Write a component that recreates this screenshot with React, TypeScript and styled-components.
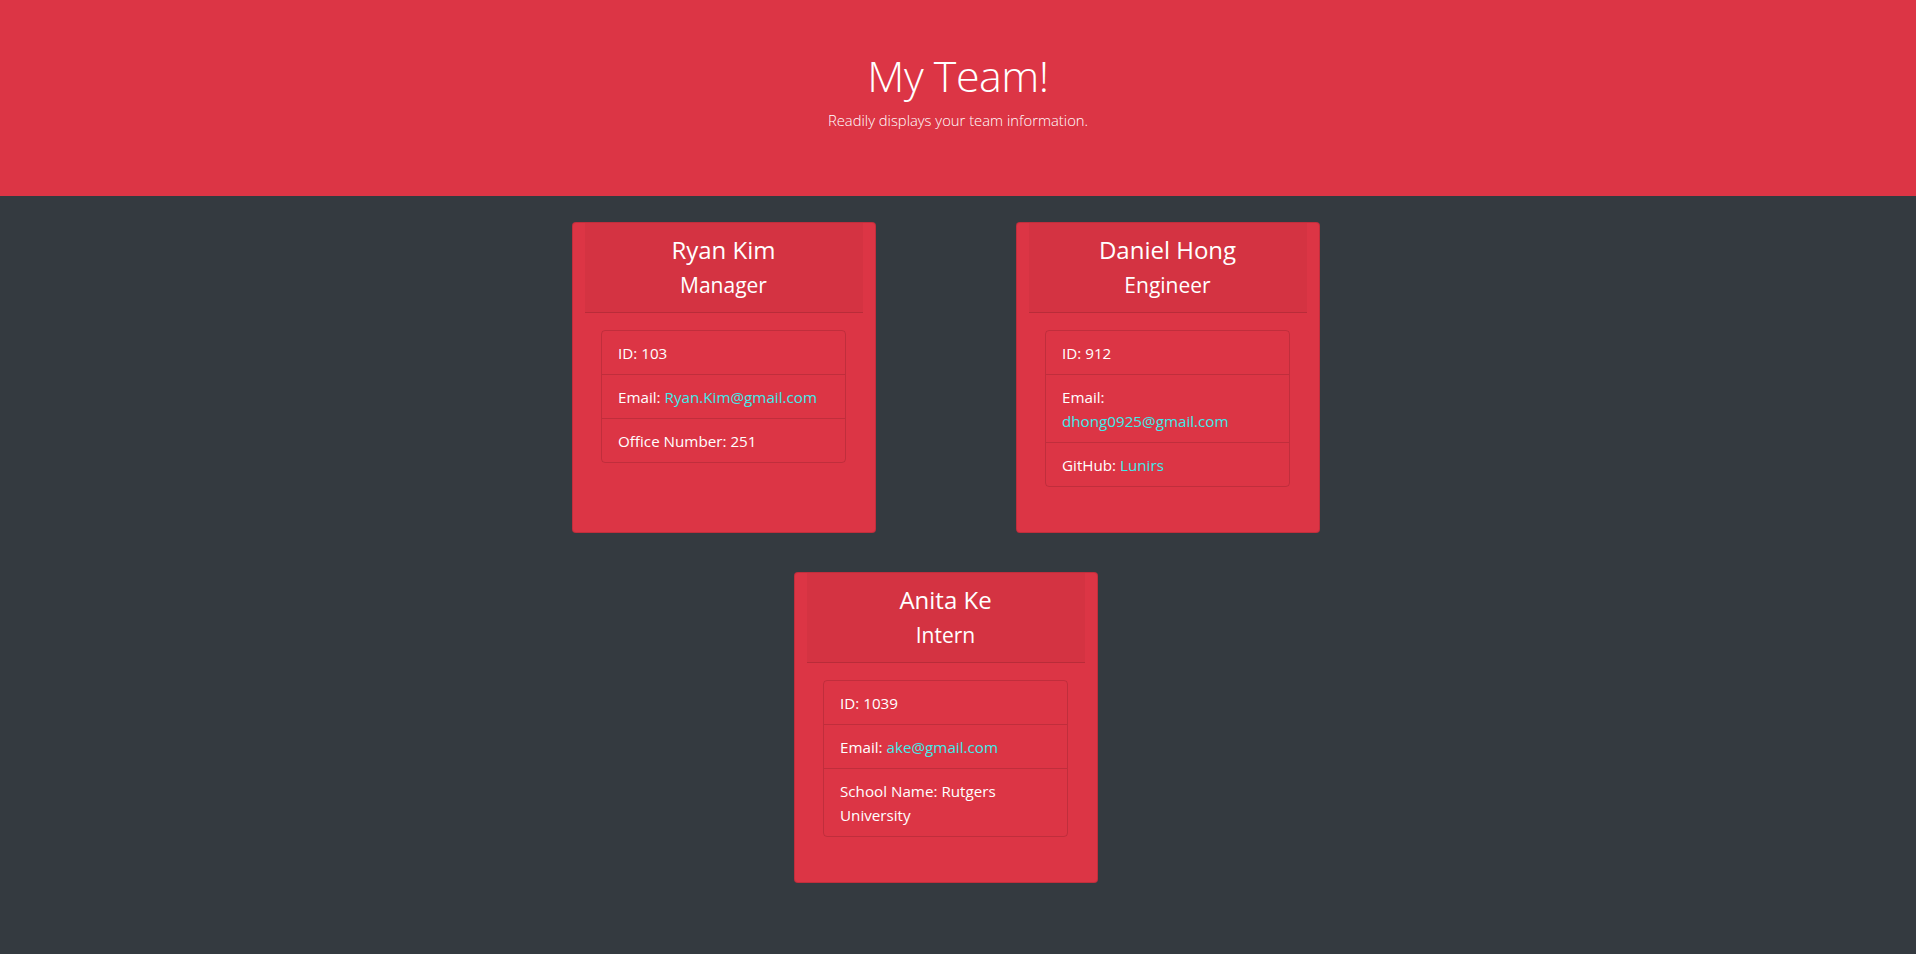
import React from "react";
import styled, { createGlobalStyle } from "styled-components";

const GlobalStyle = createGlobalStyle`
  html, body {
    margin: 0;
    padding: 0;
    background: #343a40;
    font-family: "Open Sans", "Noto Sans", "Liberation Sans", sans-serif;
    color: #fff;
  }
  * { box-sizing: border-box; }
`;

const Jumbotron = styled.header`
  height: 196px;
  background: #dc3545;
  display: flex;
  flex-direction: column;
  align-items: center;
  padding-top: 46px;
`;

const Title = styled.h1`
  margin: 0;
  font-size: 43px;
  font-weight: 300;
  line-height: 60px;
  letter-spacing: -0.5px;
`;

const Lead = styled.p`
  margin: 2px 0 0;
  font-size: 14.8px;
  font-weight: 300;
  line-height: 24px;
`;

const Main = styled.main`
  display: flex;
  flex-wrap: wrap;
  justify-content: center;
  column-gap: 140px;
  row-gap: 39px;
  padding: 26px 25px 40px 0;
  max-width: 800px;
  margin: 0 auto;
`;

const Card = styled.section`
  width: 304px;
  height: 311px;
  background: #dc3545;
  border: 1px solid rgba(0, 0, 0, 0.125);
  border-radius: 4px;
  padding: 0 12px;
  display: flex;
  flex-direction: column;
`;

const CardHeader = styled.div`
  height: 90px;
  background: rgba(0, 0, 0, 0.035);
  border-bottom: 1px solid rgba(0, 0, 0, 0.125);
  display: flex;
  flex-direction: column;
  align-items: center;
  padding-top: 11px;
`;

const Name = styled.h2`
  margin: 0;
  font-size: 24px;
  font-weight: 400;
  line-height: 32px;
`;

const Role = styled.h3`
  margin: 5px 0 0;
  font-size: 21px;
  font-weight: 400;
  line-height: 28px;
`;

const CardBody = styled.div`
  padding: 17px 16.5px;
`;

const List = styled.ul`
  list-style: none;
  margin: 0;
  padding: 0;
  border: 1px solid rgba(0, 0, 0, 0.125);
  border-radius: 4px;
`;

const Item = styled.li`
  padding: 9.5px 16px;
  font-size: 15.2px;
  line-height: 24px;
  & + & {
    border-top: 1px solid rgba(0, 0, 0, 0.125);
  }
`;

const Link = styled.a`
  color: #40eaea;
  text-decoration: none;
`;

type Member = {
  name: string;
  role: string;
  id: number;
  email: string;
  extraLabel: string;
  extra: string;
  extraLink?: boolean;
};

const team: Member[] = [
  { name: "Ryan Kim", role: "Manager", id: 103, email: "Ryan.Kim@gmail.com", extraLabel: "Office Number", extra: "251" },
  { name: "Daniel Hong", role: "Engineer", id: 912, email: "dhong0925@gmail.com", extraLabel: "GitHub", extra: "Lunirs", extraLink: true },
  { name: "Anita Ke", role: "Intern", id: 1039, email: "ake@gmail.com", extraLabel: "School Name", extra: "Rutgers University" },
];

export default function App() {
  return (
    <>
      <GlobalStyle />
      <Jumbotron>
        <Title>My Team!</Title>
        <Lead>Readily displays your team information.</Lead>
      </Jumbotron>
      <Main>
        {team.map((m) => (
          <Card key={m.id}>
            <CardHeader>
              <Name>{m.name}</Name>
              <Role>{m.role}</Role>
            </CardHeader>
            <CardBody>
              <List>
                <Item>ID: {m.id}</Item>
                <Item>
                  Email: <Link href={`mailto:${m.email}`}>{m.email}</Link>
                </Item>
                <Item>
                  {m.extraLabel}:{" "}
                  {m.extraLink ? (
                    <Link href={`https://github.com/${m.extra}`}>{m.extra}</Link>
                  ) : (
                    m.extra
                  )}
                </Item>
              </List>
            </CardBody>
          </Card>
        ))}
      </Main>
    </>
  );
}
